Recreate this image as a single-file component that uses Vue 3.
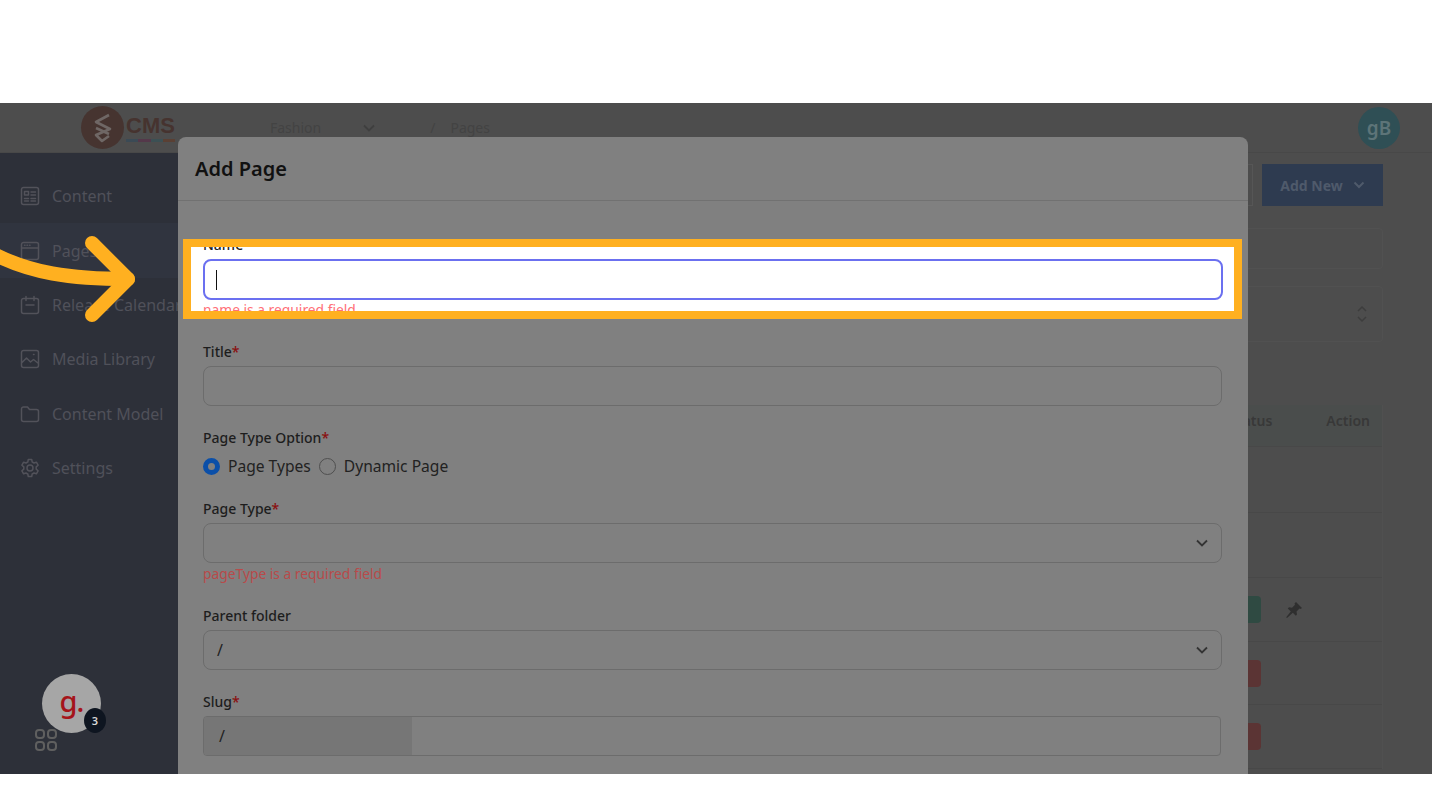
<template>
  <div class="stage">
    <header class="topbar">
      <div class="logo">
        <div class="logo-mark">
          <svg width="24" height="30" viewBox="0 0 24 30" fill="none" stroke="#6f6765" stroke-width="2.6" stroke-linejoin="round">
            <path d="M18 2 5 9l14 7-14 6 6 6 7-5" />
            <path d="M5 15l13 6" />
          </svg>
        </div>
        <div class="logo-text">
          <span>CMS</span>
          <div class="logo-line"></div>
        </div>
      </div>
      <div class="crumbs">
        <span class="crumb-site">Fashion</span>
        <svg class="crumb-chev" width="14" height="14" viewBox="0 0 14 14" fill="none" stroke="#3f3f3f" stroke-width="1.8"><path d="M2 4.5l5 5 5-5" /></svg>
        <span class="crumb-sep">/</span>
        <span>Pages</span>
      </div>
      <div class="avatar">gB</div>
    </header>

    <div class="body">
      <aside class="sidebar">
        <div v-for="item in navItems" :key="item.label" class="nav-item" :class="{ active: item.active }">
          <svg width="20" height="20" viewBox="0 0 20 20" fill="none" stroke="#52525a" stroke-width="1.5" stroke-linecap="round" stroke-linejoin="round">
            <path :d="item.icon" />
          </svg>
          <span>{{ item.label }}</span>
        </div>
      </aside>

      <main class="main">
        <div class="toolbar">
          <div class="outline-btn"></div>
          <div class="add-btn">
            Add New
            <svg width="12" height="12" viewBox="0 0 12 12" fill="none" stroke="#4f5a6b" stroke-width="2"><path d="M1.5 3.5 6 8l4.500-4.500" /></svg>
          </div>
        </div>
        <div class="card search"></div>
        <div class="card sort">
          <svg width="12" height="18" viewBox="0 0 12 18" fill="none" stroke="#3d3d3d" stroke-width="1.500"><path d="M2 6l4-4 4 4M2 12l4 4 4-4" /></svg>
        </div>
        <div class="table">
          <div class="table-head">
            <span>Status</span>
            <span>Action</span>
          </div>
          <div v-for="(row, i) in rows" :key="i" class="table-row" :style="{ height: row.height + 'px' }">
            <div v-if="row.status" class="badge" :class="row.status"></div>
            <div class="action-cell">
              <svg v-if="row.pinned" width="18" height="18" viewBox="0 0 18 18" fill="#2f2f2f">
                <path d="M11 1l6 6-1.500 1-1-.5-3 3 .5 3-1.200 1.200-3-3L2 17l-.8-.8 4.600-5.700-3-3L4 6.300l3 .5 3-3L9.500 2.500z" />
              </svg>
            </div>
          </div>
        </div>
      </main>
    </div>

    <div class="modal">
      <div class="modal-head">Add Page</div>
      <form class="modal-form">
        <div class="spot">
          <div class="spot-inner">
            <label class="label">Name<em>*</em></label>
            <div class="input focused"><span class="caret"></span></div>
            <p class="error bright">name is a required field</p>
          </div>
        </div>

        <div class="field">
          <label class="label">Title<em>*</em></label>
          <div class="input"></div>
        </div>

        <div class="field">
          <label class="label">Page Type Option<em>*</em></label>
          <div class="radios">
            <span class="radio checked"></span>
            <span class="radio-text">Page Types</span>
            <span class="radio"></span>
            <span class="radio-text">Dynamic Page</span>
          </div>
        </div>

        <div class="field">
          <label class="label">Page Type<em>*</em></label>
          <div class="input select">
            <svg width="14" height="14" viewBox="0 0 14 14" fill="none" stroke="#333" stroke-width="1.800"><path d="M2 4.500l5 5 5-5" /></svg>
          </div>
          <p class="error">pageType is a required field</p>
        </div>

        <div class="field">
          <label class="label">Parent folder</label>
          <div class="input select">
            <span>/</span>
            <svg width="14" height="14" viewBox="0 0 14 14" fill="none" stroke="#333" stroke-width="1.800"><path d="M2 4.500l5 5 5-5" /></svg>
          </div>
        </div>

        <div class="field">
          <label class="label">Slug<em>*</em></label>
          <div class="slug">
            <div class="slug-prefix">/</div>
          </div>
        </div>
      </form>
    </div>

    <svg class="arrow" width="150" height="100" viewBox="0 0 150 100" fill="none" stroke="#ffb020" stroke-width="14" stroke-linecap="round" stroke-linejoin="round">
      <path d="M-8 16C30 36 70 42 128 42" />
      <path d="M92 6l36 36-36 36" />
    </svg>

    <div class="widget">
      <span class="widget-g">g.</span>
      <span class="widget-count">3</span>
    </div>
    <svg class="grid-icon" width="24" height="24" viewBox="0 0 24 24" fill="none" stroke="#5f5f5f" stroke-width="2">
      <rect x="2" y="2" width="8" height="8" rx="3" />
      <rect x="14" y="2" width="8" height="8" rx="3" />
      <rect x="2" y="14" width="8" height="8" rx="3" />
      <rect x="14" y="14" width="8" height="8" rx="3" />
    </svg>
  </div>
</template>

<script setup>
const navItems = [
  { label: 'Content', icon: 'M3.500 1.500h13a2 2 0 0 1 2 2v13a2 2 0 0 1-2 2h-13a2 2 0 0 1-2-2v-13a2 2 0 0 1 2-2zM4.500 5.500h4v3.500h-4zM11 6h4.500M11 9h4.500M4.500 12.500h4M11 12.500h4.500M4.500 15h4M11 15h4.500' },
  { label: 'Pages', active: true, icon: 'M3.500 1.500h13a2 2 0 0 1 2 2v13a2 2 0 0 1-2 2h-13a2 2 0 0 1-2-2v-13a2 2 0 0 1 2-2zM1.500 7h17M4.500 4.300h.5M7 4.300h.5M9.500 4.300h.5' },
  { label: 'Release Calendar', icon: 'M3.500 3.500h13a2 2 0 0 1 2 2v11a2 2 0 0 1-2 2h-13a2 2 0 0 1-2-2v-11a2 2 0 0 1 2-2zM6 1.500v4M14 1.500v4M6 10h8' },
  { label: 'Media Library', icon: 'M3.500 1.500h13a2 2 0 0 1 2 2v13a2 2 0 0 1-2 2h-13a2 2 0 0 1-2-2v-13a2 2 0 0 1 2-2zM1.500 14l5-5 4 4 3-2.500 5 4M13.500 5.500h.5' },
  { label: 'Content Model', icon: 'M1.500 5a2 2 0 0 1 2-2h4l2 2.500h7a2 2 0 0 1 2 2v8a2 2 0 0 1-2 2h-13a2 2 0 0 1-2-2z' },
  { label: 'Settings', icon: 'M8.300 1.500h3.400l.5 2.500 1.800 1 2.400-.8 1.700 3-1.900 1.700v2.200l1.900 1.700-1.700 3-2.400-.8-1.800 1-.5 2.500H8.300l-.5-2.500-1.800-1-2.400.8-1.700-3 1.900-1.700V8.900L1.900 7.200l1.700-3 2.400.8 1.800-1zM10 7a3 3 0 1 0 0 6 3 3 0 0 0 0-6z' },
]

const rows = [
  { height: 66 },
  { height: 65 },
  { height: 64, status: 'green', pinned: true },
  { height: 63, status: 'red' },
  { height: 64, status: 'red' },
]
</script>

<style>
html,
body {
  margin: 0;
  background: #fff;
}
</style>

<style scoped>
.stage {
  position: relative;
  margin-top: 103px;
  height: 671px;
  overflow: hidden;
  background: #4d4d4d;
  font-family: "Noto Sans", "Open Sans", sans-serif;
  box-sizing: border-box;
}
.topbar {
  display: flex;
  align-items: center;
  height: 50px;
  padding: 0 32px 0 81px;
  box-sizing: border-box;
  background: #4d4d4d;
  border-bottom: 1px solid #484848;
}
.logo {
  display: flex;
  align-items: center;
  gap: 2px;
}
.logo-mark {
  display: flex;
  align-items: center;
  justify-content: center;
  width: 43px;
  height: 43px;
  border-radius: 50%;
  background: #463430;
}
.logo-text {
  font-family: "Liberation Sans", sans-serif;
  font-size: 22px;
  line-height: 24px;
  font-weight: 700;
  color: #46332f;
}
.logo-line {
  width: 49px;
  height: 3px;
  margin-top: 1px;
  background: linear-gradient(90deg, #3b4a55 0 25%, #54384a 25% 50%, #3c5054 50% 75%, #5a4034 75%);
}
.crumbs {
  display: flex;
  align-items: center;
  margin-left: 95px;
  font-size: 14px;
  color: #434343;
}
.crumb-chev {
  margin-left: 41px;
}
.crumb-sep {
  margin: 0 15px 0 54px;
}
.avatar {
  display: flex;
  align-items: center;
  justify-content: center;
  width: 42px;
  height: 42px;
  margin-left: auto;
  border-radius: 50%;
  background: #2f4f55;
  color: #5d7478;
  font-size: 19px;
  font-weight: 600;
}
.body {
  display: flex;
  height: 621px;
}
.sidebar {
  flex: 0 0 178px;
  padding-top: 16px;
  box-sizing: border-box;
  background: #2d3039;
}
.nav-item {
  display: flex;
  align-items: center;
  gap: 12px;
  height: 54.400px;
  padding-left: 20px;
  font-size: 16px;
  color: #50515a;
  white-space: nowrap;
}
.nav-item.active {
  background: #30343f;
}
.main {
  flex: 1;
  padding: 11px 49px 0 0;
  display: flex;
  flex-direction: column;
  align-items: flex-end;
}
.toolbar {
  display: flex;
  gap: 9px;
}
.outline-btn {
  width: 120px;
  height: 42px;
  box-sizing: border-box;
  border: 1px solid #565656;
}
.add-btn {
  display: flex;
  align-items: center;
  justify-content: center;
  gap: 10px;
  width: 121px;
  height: 42px;
  background: #2e3b50;
  color: #4f5a6b;
  font-size: 14px;
  font-weight: 700;
}
.card {
  width: 400px;
  box-sizing: border-box;
  border: 1px solid #515151;
  border-radius: 4px;
}
.search {
  height: 41px;
  margin-top: 22px;
}
.sort {
  display: flex;
  align-items: center;
  justify-content: flex-end;
  height: 56px;
  margin-top: 17px;
  padding-right: 14px;
}
.table {
  width: 400px;
  margin-top: 63px;
  background: #4d4d4d;
  border-right: 1px solid #505050;
  box-sizing: border-box;
}
.table-head {
  display: flex;
  justify-content: flex-end;
  align-items: center;
  gap: 54px;
  height: 42px;
  padding: 0 12px 10px 0;
  box-sizing: border-box;
  background: #4a4d4c;
  border-bottom: 1px solid #484848;
  font-size: 14px;
  font-weight: 600;
  color: #383838;
}
.table-row {
  display: flex;
  justify-content: flex-end;
  align-items: center;
  box-sizing: border-box;
  border-bottom: 1px solid #484848;
}
.badge {
  width: 60px;
  height: 27px;
  border-radius: 4px;
}
.badge.green {
  background: #2f4a42;
}
.badge.red {
  background: #5b3434;
}
.action-cell {
  width: 121px;
  padding-left: 24px;
  box-sizing: border-box;
  display: flex;
}
.modal {
  position: absolute;
  top: 34px;
  left: 178px;
  width: 1070px;
  height: 700px;
  background: #808080;
  border-radius: 8px 8px 0 0;
}
.modal-head {
  height: 64px;
  padding-left: 17px;
  box-sizing: border-box;
  border-bottom: 1px solid #717171;
  font-size: 20px;
  font-weight: 600;
  line-height: 64px;
  color: #111;
}
.modal-form {
  padding: 38px 26px 0 25px;
}
.spot {
  width: 1059px;
  height: 80px;
  margin: 0 -20px 23px;
  box-sizing: border-box;
  border: 8px solid #ffb020;
  background: #fff;
  overflow: hidden;
}
.spot-inner {
  margin: -12px 11px 0 12px;
}
.spot .label {
  color: #222;
}
.field {
  margin-bottom: 22px;
}
.label {
  display: block;
  height: 20px;
  margin-bottom: 4px;
  font-size: 14px;
  line-height: 20px;
  font-weight: 500;
  color: #1d1d1d;
}
.label em {
  font-style: normal;
  color: #8a0f0f;
}
.input {
  display: flex;
  align-items: center;
  height: 40px;
  padding: 0 13px;
  box-sizing: border-box;
  border: 1px solid #6c6c6c;
  border-radius: 8px;
  font-size: 16px;
  color: #222;
}
.input.focused {
  height: 41px;
  border: 2.500px solid #6b70f0;
  background: #fff;
}
.caret {
  width: 1.200px;
  height: 20px;
  margin-left: -2px;
  background: #111;
}
.select {
  padding-right: 12px;
}
.select svg {
  margin-left: auto;
}
.error {
  height: 20px;
  margin: 1px 0 0;
  font-size: 13.800px;
  line-height: 20px;
  color: #b84a4a;
}
.error.bright {
  margin-top: 0;
  color: #ff7078;
}
.radios {
  display: flex;
  align-items: center;
  height: 22px;
  margin-top: 7px;
  font-size: 15.600px;
  color: #222;
}
.radio {
  width: 17px;
  height: 17px;
  box-sizing: border-box;
  border: 1.500px solid #4f4f4f;
  border-radius: 50%;
}
.radio.checked {
  border: 5px solid #0b4fa8;
  background: #808080;
}
.radio-text {
  margin: 0 8px;
}
.slug {
  display: flex;
  height: 40px;
  width: 1018px;
  box-sizing: border-box;
  border: 1px solid #6c6c6c;
  border-radius: 4px;
  overflow: hidden;
}
.slug-prefix {
  width: 208px;
  padding-left: 15px;
  box-sizing: border-box;
  background: #767676;
  font-size: 16px;
  line-height: 38px;
  color: #222;
}
.arrow {
  position: absolute;
  top: 134px;
  left: 0;
  overflow: visible;
}
.widget {
  position: absolute;
  top: 571px;
  left: 42px;
  display: flex;
  align-items: center;
  justify-content: center;
  width: 59px;
  height: 59px;
  border-radius: 50%;
  background: #a6a6a6;
}
.widget-g {
  margin-top: -6px;
  font-size: 29px;
  line-height: 30px;
  font-weight: 500;
  letter-spacing: -1px;
  color: #a5141a;
}
.widget-count {
  position: absolute;
  right: -5px;
  bottom: 0;
  display: flex;
  align-items: center;
  justify-content: center;
  width: 22px;
  height: 25px;
  border-radius: 50%;
  background: #0e1520;
  color: #d8d8d8;
  font-size: 11px;
  font-weight: 600;
}
.grid-icon {
  position: absolute;
  top: 625px;
  left: 34px;
}
</style>
